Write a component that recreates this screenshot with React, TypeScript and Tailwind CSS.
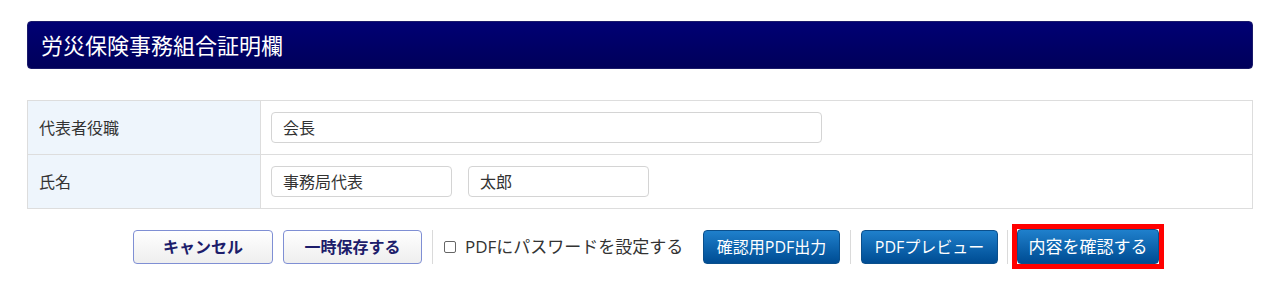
import React from "react";

const font = { fontFamily: '"Open Sans", "Noto Sans CJK JP", sans-serif' };

function WhiteButton({ children, w }: { children: React.ReactNode; w: string }) {
  return (
    <button
      className={`${w} h-[34px] shrink-0 rounded-[4px] border border-[#7f8fd4] bg-gradient-to-b from-[#ffffff] to-[#eeeeee] text-[16px] font-bold text-[#1d1d6b] flex items-center justify-center`}
    >
      {children}
    </button>
  );
}

function BlueButton({ children, w, cls = "" }: { children: React.ReactNode; w: string; cls?: string }) {
  return (
    <button
      className={`${w} shrink-0 rounded-[4px] border border-[#0a4f8c] bg-gradient-to-b from-[#1f80cc] to-[#004c93] text-white flex items-center justify-center ${cls}`}
    >
      {children}
    </button>
  );
}

function Sep() {
  return <div className="w-px h-[34px] bg-[#dadada] shrink-0" />;
}

export default function App() {
  return (
    <div className="bg-white w-[1280px] h-[283px] px-[27px] pt-[21px]" style={font}>
      <div className="h-[48px] rounded-[4px] bg-gradient-to-b from-[#000074] to-[#00005a] border border-[#1a1a6a] flex items-center pl-[13px] text-white text-[22px]">
        労災保険事務組合証明欄
      </div>

      <div className="mt-[31px] border border-[#dddddd]">
        <div className="grid grid-cols-[233px_1fr] h-[54px] border-b border-[#dddddd]">
          <div className="bg-[#eef5fc] border-r border-[#dddddd] flex items-center pl-[11px] text-[16px] text-[#333333]">
            代表者役職
          </div>
          <div className="flex items-center pl-[10px]">
            <div className="w-[551px] h-[31px] rounded-[4px] border border-[#d4d4d4] flex items-center px-[11px] text-[16px] text-[#333333]">
              会長
            </div>
          </div>
        </div>
        <div className="grid grid-cols-[233px_1fr] h-[53px]">
          <div className="bg-[#eef5fc] border-r border-[#dddddd] flex items-center pl-[11px] text-[16px] text-[#333333]">
            氏名
          </div>
          <div className="flex items-center pl-[10px] gap-[16px]">
            <div className="w-[181px] h-[31px] rounded-[4px] border border-[#d4d4d4] flex items-center px-[11px] text-[16px] text-[#333333]">
              事務局代表
            </div>
            <div className="w-[181px] h-[31px] rounded-[4px] border border-[#d4d4d4] flex items-center px-[11px] text-[16px] text-[#333333]">
              太郎
            </div>
          </div>
        </div>
      </div>

      <div className="mt-[15px] flex items-center justify-center pl-[17px]">
        <WhiteButton w="w-[140px]">キャンセル</WhiteButton>
        <div className="w-[10px] shrink-0" />
        <WhiteButton w="w-[139px]">一時保存する</WhiteButton>
        <div className="w-[10px] shrink-0" />
        <Sep />
        <div className="w-[11px] shrink-0" />
        <label className="w-[259px] shrink-0 flex items-center text-[17px] text-[#333333] whitespace-nowrap">
          <span className="w-[12px] h-[12px] border border-[#666666] rounded-[2px] bg-white shrink-0" />
          <span className="ml-[9px]">PDFにパスワードを設定する</span>
        </label>
        <BlueButton w="w-[137px]" cls="h-[34px] text-[16px]">確認用PDF出力</BlueButton>
        <div className="w-[10px] shrink-0" />
        <Sep />
        <div className="w-[10px] shrink-0" />
        <BlueButton w="w-[137px]" cls="h-[34px] text-[16px]">PDFプレビュー</BlueButton>
        <div className="w-[9px] shrink-0" />
        <Sep />
        <div className="w-[4px] shrink-0" />
        <div className="border-[5px] border-[#ff0000] shrink-0 flex">
          <BlueButton w="w-[142px]" cls="h-[35px] text-[17px]">
            内容を確認する
          </BlueButton>
        </div>
      </div>
    </div>
  );
}
